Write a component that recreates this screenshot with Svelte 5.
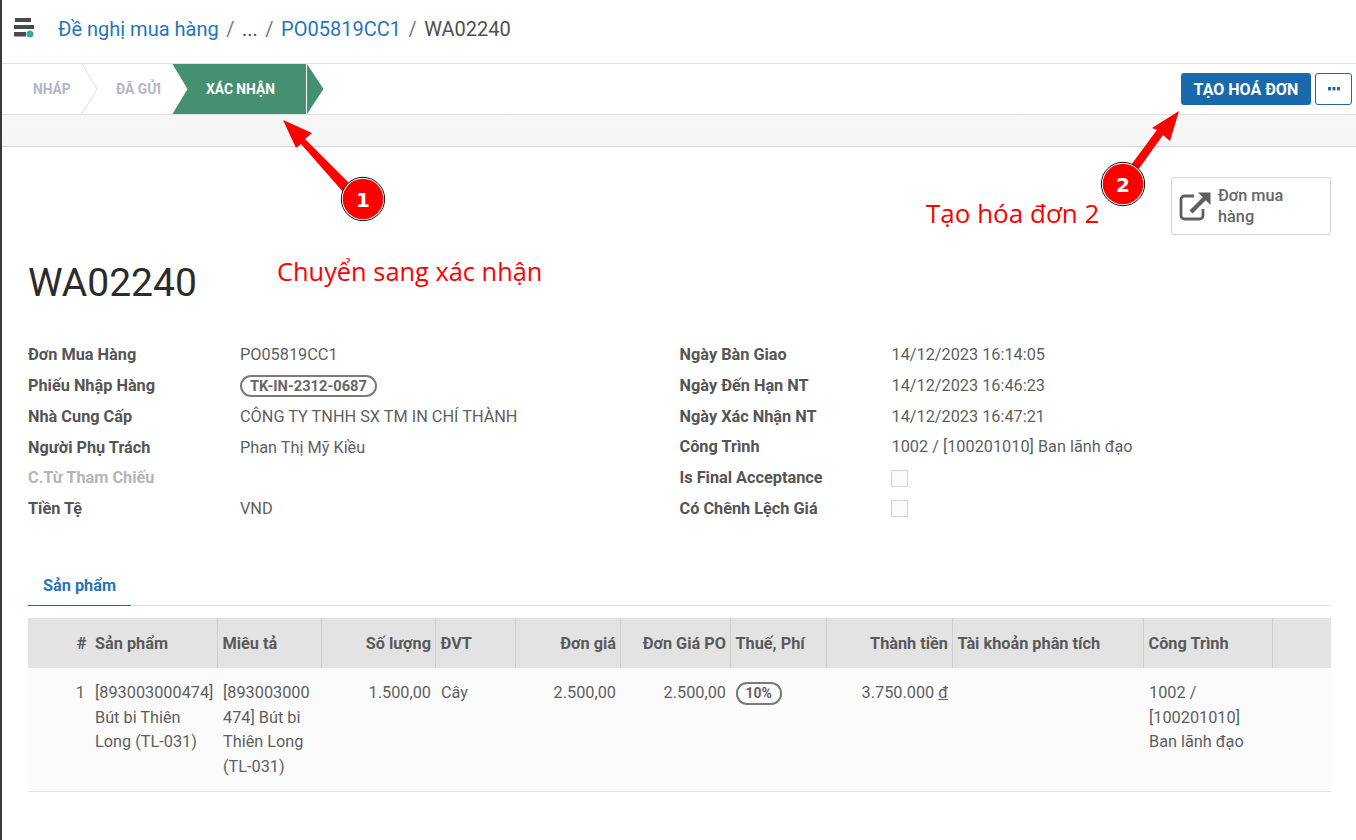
<script>
  const left = [
    ['Đơn Mua Hàng', 'PO05819CC1'],
    ['Phiếu Nhập Hàng', null, 'tag'],
    ['Nhà Cung Cấp', 'CÔNG TY TNHH SX TM IN CHÍ THÀNH'],
    ['Người Phụ Trách', 'Phan Thị Mỹ Kiều'],
    ['C.Từ Tham Chiếu', '', 'muted'],
    ['Tiền Tệ', 'VND']
  ];
  const right = [
    ['Ngày Bàn Giao', '14/12/2023 16:14:05'],
    ['Ngày Đến Hạn NT', '14/12/2023 16:46:23'],
    ['Ngày Xác Nhận NT', '14/12/2023 16:47:21'],
    ['Công Trình', '1002 / [100201010] Ban lãnh đạo'],
    ['Is Final Acceptance', null, 'check'],
    ['Có Chênh Lệch Giá', null, 'check']
  ];
  const cols = [
    ['#', 62, 'r'], ['Sản phẩm', 127, ''], ['Miêu tả', 104, ''], ['Số lượng', 114, 'r'],
    ['ĐVT', 80, ''], ['Đơn giá', 105, 'r'], ['Đơn Giá PO', 110, 'r'], ['Thuế, Phí', 96, ''],
    ['Thành tiền', 126, 'r'], ['Tài khoản phân tích', 191, ''], ['Công Trình', 129, ''], ['', 59, '']
  ];
</script>

<div class="page">
  <header class="top">
    <svg class="logo" width="22" height="22" viewBox="0 0 22 22">
      <rect x="2" y="0" width="16" height="4" fill="#4a4a4a"/>
      <rect x="1" y="7" width="20" height="4" fill="#4a4a4a"/>
      <rect x="1" y="14" width="12" height="4.5" fill="#4a4a4a"/>
      <circle cx="17" cy="16" r="3.5" fill="#3aa9a4"/>
    </svg>
    <nav class="crumbs">
      <span class="link">Đề nghị mua hàng</span><span class="sep">/</span><span class="cur">...</span><span class="sep">/</span><span class="link">PO05819CC1</span><span class="sep">/</span><span class="cur">WA02240</span>
    </nav>
  </header>

  <div class="statusbar">
    <div class="steps">
      <svg class="stepbg" width="322" height="50" viewBox="0 0 322 50">
        <path d="M80 0 L95 25 L80 50" fill="none" stroke="#dfe1e6"/>
        <path d="M170.5 0 H304 V50 H170.5 L185.5 25 Z" fill="#449070"/>
        <path d="M305 0 L321.5 25 L305 50 Z" fill="#449070"/>
      </svg>
      <span class="step s1">NHÁP</span>
      <span class="step s2">ĐÃ GỬI</span>
      <span class="step s3">XÁC NHẬN</span>
    </div>
    <div class="actions">
      <button class="primary">TẠO HOÁ ĐƠN</button>
      <button class="more" aria-label="Thêm">
        <svg width="12" height="4" viewBox="0 0 12 4"><rect x="0" y="0" width="3" height="3.4" fill="#1a6aab"/><rect x="4.5" y="0" width="3" height="3.4" fill="#1a6aab"/><rect x="9" y="0" width="3" height="3.4" fill="#1a6aab"/></svg>
      </button>
    </div>
  </div>

  <div class="band"></div>

  <main class="sheet">
    <div class="smartrow">
      <div class="smart">
        <svg width="33" height="30" viewBox="0 0 33 30" fill="none">
          <path d="M15 5 H5.5 A3.5 3.5 0 0 0 2 8.5 V24.5 A3.5 3.5 0 0 0 5.5 28 H20.5 A3.5 3.5 0 0 0 24 24.5 V18" stroke="#5f5f5f" stroke-width="2.8"/>
          <path d="M12 21 L27 6" stroke="#5f5f5f" stroke-width="4.2"/>
          <path d="M19 1.5 H31.5 V14 Z" fill="#5f5f5f"/>
        </svg>
        <span>Đơn mua<br/>hàng</span>
      </div>
    </div>

    <h1>WA02240</h1>

    <div class="fields">
      <div class="col">
        {#each left as [k, v, t]}
          <div class="field">
            <span class="key" class:muted={t === 'muted'}>{k}</span>
            {#if t === 'tag'}<span class="val"><span class="pill">TK-IN-2312-0687</span></span>
            {:else}<span class="val">{v}</span>{/if}
          </div>
        {/each}
      </div>
      <div class="col rightcol">
        {#each right as [k, v, t]}
          <div class="field">
            <span class="key">{k}</span>
            {#if t === 'check'}<span class="val"><span class="box"></span></span>
            {:else}<span class="val">{v}</span>{/if}
          </div>
        {/each}
      </div>
    </div>

    <div class="tabs"><span class="tab">Sản phẩm</span></div>

    <table>
      <colgroup>{#each cols as c}<col style="width:{c[1]}px"/>{/each}</colgroup>
      <thead>
        <tr>{#each cols as c, i}<th class:r={c[2] === 'r'} class:nob={i < 2}>{c[0]}</th>{/each}</tr>
      </thead>
      <tbody>
        <tr>
          <td class="r first">1</td>
          <td class="lines tight">[893003000474]<br/>Bút bi Thiên<br/>Long (TL-031)</td>
          <td class="lines">[893003000<br/>474] Bút bi<br/>Thiên Long<br/>(TL-031)</td>
          <td class="r">1.500,00</td>
          <td>Cây</td>
          <td class="r">2.500,00</td>
          <td class="r">2.500,00</td>
          <td class="pillcell"><span class="pill small">10%</span></td>
          <td class="r">3.750.000 <u>đ</u></td>
          <td></td>
          <td class="lines">1002 /<br/>[100201010]<br/>Ban lãnh đạo</td>
          <td></td>
        </tr>
      </tbody>
    </table>
  </main>

  <svg class="arrows" width="1356" height="240" viewBox="0 0 1356 240">
    <path d="M283 120 L312 133 L305 139 L352 186 L344 193 L301 144 L296 148 Z" fill="#ff0000"/>
    <circle cx="363" cy="199" r="21.7" fill="#fff" stroke="#111" stroke-width="1"/>
    <circle cx="363" cy="199" r="20.3" fill="#ff0000"/>
    <path d="M1179 111 L1170 141 L1163 135 L1138 170 L1131 165 L1157 130 L1152 128 Z" fill="#ff0000"/>
    <circle cx="1123" cy="184" r="21.7" fill="#fff" stroke="#111" stroke-width="1"/>
    <circle cx="1123" cy="184" r="20.3" fill="#ff0000"/>
  </svg>
  <span class="badge b1">1</span>
  <span class="badge b2">2</span>
  <span class="note n1">Chuyển sang xác nhận</span>
  <span class="note n2">Tạo hóa đơn 2</span>
</div>

<style>
  :global(body) { margin: 0; background: #fff; }
  .page {
    position: relative;
    width: 1356px;
    height: 840px;
    overflow: hidden;
    box-sizing: border-box;
    border-left: 2px solid #3a3a3a;
    font-family: Roboto, "Noto Sans", sans-serif;
    font-size: 16.3px;
    color: #5f5f5f;
    background: #fff;
  }
  .top {
    height: 63px;
    display: flex;
    align-items: center;
    padding-left: 11px;
    border-bottom: 1px solid #dee2e6;
    box-sizing: content-box;
  }
  .logo { margin-top: -5px; margin-right: 23px; flex: none; }
  .crumbs { font-size: 20px; display: flex; align-items: center; margin-top: -5px; }
  .link { color: #1f76bb; }
  .cur { color: #4f4f4f; }
  .sep { color: #7a7a7a; margin: 0 7.5px; }

  .statusbar {
    height: 50px;
    border-bottom: 1px solid #dee2e6;
    display: flex;
    justify-content: space-between;
    align-items: center;
    padding-right: 4px;
  }
  .steps { position: relative; width: 322px; height: 50px; }
  .stepbg { position: absolute; left: 0; top: 0; }
  .step { position: absolute; top: 17px; font-size: 13.8px; font-weight: 700; line-height: 17px; color: #b3b8c2; }
  .s1 { left: 31px; }
  .s2 { left: 114px; }
  .s3 { left: 204px; color: #fff; }
  .actions { display: flex; gap: 4px; align-items: center; }
  button { font-family: inherit; cursor: pointer; box-sizing: border-box; }
  .primary {
    width: 130px; height: 32px;
    background: #1a6aab; color: #fff; border: 0; border-radius: 3px;
    font-size: 16px; font-weight: 700; padding: 0;
  }
  .more {
    width: 37px; height: 32px; background: #fff;
    border: 1px solid #1a6aab; border-radius: 3px; padding: 0;
    display: flex; align-items: center; justify-content: center;
  }

  .band {
    height: 31px;
    background: linear-gradient(#f7f7f8, #f5f5f6);
    border-bottom: 1px solid #ced4da;
  }

  .sheet { padding: 30px 25px 0 26px; }
  .smartrow { display: flex; justify-content: flex-end; height: 58px; }
  .smart {
    width: 160px; height: 58px; box-sizing: border-box;
    border: 1px solid #ced4da; border-radius: 3px;
    display: flex; align-items: center; gap: 6px; padding-left: 7px;
    line-height: 21px; font-weight: 500; color: #666;
  }
  .smart span { margin-top: -1px; }
  h1 { margin: 25px 0 0; font-size: 39px; line-height: 46px; font-weight: 400; color: #2b2b2b; }

  .fields { display: flex; margin-top: 34px; }
  .col { width: 651.5px; }
  .field { height: 30.75px; display: flex; align-items: center; line-height: 20px; }
  .rightcol .field { height: 30.7px; }
  .key { width: 212px; flex: none; font-weight: 700; color: #555; }
  .key.muted { color: #b5b5b5; }
  .val { color: #5f5f5f; display: flex; align-items: center; }
  .pill {
    display: inline-block; box-sizing: border-box;
    border: 2px solid #7a7a7a; border-radius: 11px;
    padding: 0 8px; font-size: 14.7px; line-height: 18px; font-weight: 700; color: #666;
  }
  .pill.small { font-size: 14px; line-height: 19px; padding: 0 8px; margin-top: 1px; }
  .box { width: 17px; height: 17px; box-sizing: border-box; border: 1px solid #ced4da; background: #fbfbfb; margin-left: -1px; }

  .tabs { margin-top: 48px; height: 32px; border-bottom: 1px solid #dee2e6; }
  .tab {
    display: block; width: 103px; height: 32px; box-sizing: content-box;
    text-align: center; color: #1f76bb; font-weight: 700;
    line-height: 26px; border-bottom: 1px solid #1a6aab;
  }

  table { margin-top: 12px; border-collapse: collapse; table-layout: fixed; width: 1303px; }
  th {
    height: 50px; background: #e3e3e3; padding: 2px 3.5px 0 5px; box-sizing: border-box;
    text-align: left; font-weight: 700; color: #5a5a5a;
    border-left: 1px solid #d0d0d0; white-space: nowrap; overflow: hidden;
  }
  th.nob { border-left: 0; }
  td {
    background: #fbfbfb; padding: 13.5px 4px 12px 6px; vertical-align: top;
    line-height: 24.5px; color: #5f5f5f;
    border-bottom: 1px solid #e3e3e3;
  }
  td.first { padding-right: 5px; }
  td.tight { padding-left: 5px; }
  td.pillcell { padding-left: 5.5px; }
  .lines { white-space: nowrap; }
  .r { text-align: right; }

  .arrows { position: absolute; left: -2px; top: 0; pointer-events: none; }
  .badge {
    position: absolute; width: 40px; text-align: center; color: #fff;
    font-family: "DejaVu Sans", sans-serif; font-weight: 700; font-size: 20px; line-height: 24px;
  }
  .b1 { left: 341px; top: 188px; }
  .b2 { left: 1101px; top: 173px; }
  .note { position: absolute; color: #ff0000; font-family: "Open Sans", sans-serif; line-height: 32px; white-space: nowrap; }
  .n1 { left: 275px; top: 255px; font-size: 25.4px; }
  .n2 { left: 924px; top: 197px; font-size: 26px; }
</style>
